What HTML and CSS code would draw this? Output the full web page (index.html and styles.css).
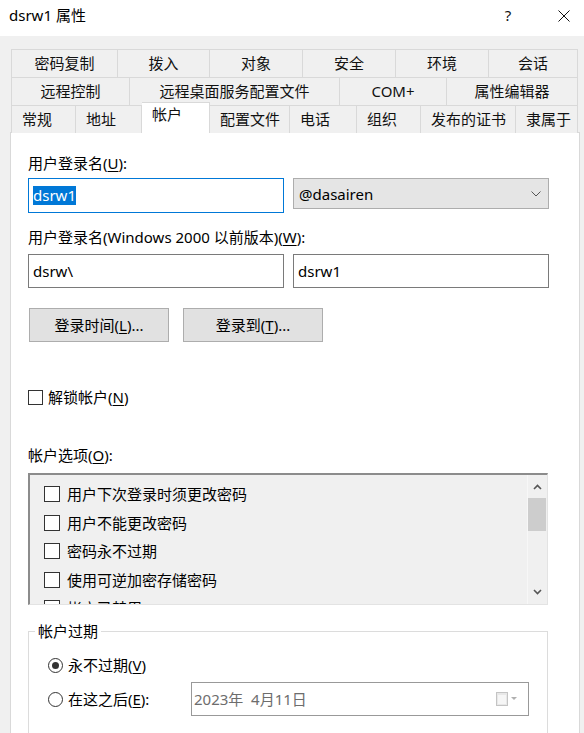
FILE: index.html
```html
<!DOCTYPE html>
<html lang="zh-CN">
<head>
<meta charset="utf-8">
<title>dsrw1 属性</title>
<link rel="stylesheet" href="styles.css">
</head>
<body>
<div class="titlebar">
  <span class="title">dsrw1 属性</span>
  <span class="help">?</span>
  <svg class="close" width="12" height="12" viewBox="0 0 12 12"><path d="M0.5 0.5 L11.5 11.5 M11.5 0.5 L0.5 11.5" stroke="#111" stroke-width="1" fill="none"/></svg>
</div>

<div class="tabs">
  <div class="tabrow r1">
    <div class="tab">密码复制</div>
    <div class="tab">拨入</div>
    <div class="tab">对象</div>
    <div class="tab">安全</div>
    <div class="tab">环境</div>
    <div class="tab">会话</div>
  </div>
  <div class="tabrow r2">
    <div class="tab">远程控制</div>
    <div class="tab">远程桌面服务配置文件</div>
    <div class="tab">COM+</div>
    <div class="tab">属性编辑器</div>
  </div>
  <div class="tabrow r3">
    <div class="tab">常规</div>
    <div class="tab">地址</div>
    <div class="tab active">帐户</div>
    <div class="tab">配置文件</div>
    <div class="tab">电话</div>
    <div class="tab">组织</div>
    <div class="tab">发布的证书</div>
    <div class="tab">隶属于</div>
  </div>
</div>

<div class="page">
  <div class="label">用户登录名(<u>U</u>):</div>
  <div class="pair first">
    <div class="textbox focus"><span class="sel">dsrw1</span></div>
    <div class="combo">
      <span>@dasairen</span>
      <svg width="10" height="6" viewBox="0 0 10 6"><path d="M0.5 0.5 L5 5 L9.5 0.5" stroke="#555" stroke-width="1" fill="none"/></svg>
    </div>
  </div>

  <div class="label gap14">用户登录名(Windows 2000 以前版本)(<u>W</u>):</div>
  <div class="pair second">
    <div class="textbox">dsrw\</div>
    <div class="textbox">dsrw1</div>
  </div>

  <div class="buttons">
    <div class="btn">登录时间(<u>L</u>)...</div>
    <div class="btn">登录到(<u>T</u>)...</div>
  </div>

  <div class="check-row">
    <span class="cb"></span><span>解锁帐户(<u>N</u>)</span>
  </div>

  <div class="label gap38">帐户选项(<u>O</u>):</div>
  <div class="listbox">
    <div class="items">
      <div class="item"><span class="cb16"></span>用户下次登录时须更改密码</div>
      <div class="item"><span class="cb16"></span>用户不能更改密码</div>
      <div class="item"><span class="cb16"></span>密码永不过期</div>
      <div class="item"><span class="cb16"></span>使用可逆加密存储密码</div>
      <div class="item"><span class="cb16"></span>帐户已禁用</div>
    </div>
    <div class="scrollbar">
      <div class="sb-btn up"><svg width="9" height="6" viewBox="0 0 9 6"><path d="M1 5 L4.5 1.5 L8 5" stroke="#555" stroke-width="1.6" fill="none"/></svg></div>
      <div class="thumb"></div>
      <div class="sb-btn down"><svg width="9" height="6" viewBox="0 0 9 6"><path d="M1 1 L4.5 4.5 L8 1" stroke="#555" stroke-width="1.6" fill="none"/></svg></div>
    </div>
  </div>

  <div class="group">
    <div class="legend">帐户过期</div>
    <div class="radio-row one">
      <span class="radio checked"></span><span>永不过期(<u>V</u>)</span>
    </div>
    <div class="radio-row two">
      <span class="radio"></span><span class="radio-label">在这之后(<u>E</u>):</span>
      <div class="datepicker">
        <span class="date">2023年  4月11日</span>
        <span class="dp-icon">
          <svg width="24" height="14" viewBox="0 0 24 14"><rect x="0.5" y="0.5" width="11" height="13" fill="#e8e8e8" stroke="#c4c4c4"/><rect x="2" y="3" width="8" height="9" fill="#f6f6f6"/><path d="M15 5 L21 5 L18 8 Z" fill="#b0b0b0"/></svg>
        </span>
      </div>
    </div>
  </div>
</div>
</body>
</html>
```

FILE: styles.css
```css
* { box-sizing: border-box; }
html, body { margin: 0; height: 100%; overflow: hidden; }
body {
  background: #f0f0f0;
  font-family: "Noto Sans", "Noto Sans CJK SC", sans-serif;
  font-size: 15px;
  line-height: 20px;
  color: #000;
}
u { text-decoration: underline; text-underline-offset: 2px; }

.titlebar {
  height: 36px;
  background: #fff;
  display: flex;
  align-items: flex-start;
  padding: 5px 0 0 9px;
}
.title { flex: 1; }
.help { width: 8px; text-align: center; color: #111; }
.close { margin: 5px 14px 0 46px; }

.tabs { margin: 13px 0 0 11px; width: 567px; }
.tabrow { display: grid; height: 28px; align-items: start; }
.r1 { grid-template-columns: 107px 92px 93px 93px 93px 89px; }
.r2 { grid-template-columns: 119px 210px 107px 131px; }
.r3 { grid-template-columns: 65px 66px 68px 80px 67px 64px 95px 62px; height: 27px; }
.tab {
  height: 100%;
  border-top: 1px solid #d9d9d9;
  border-right: 1px solid #d9d9d9;
  background: #f0f0f0;
  display: flex;
  align-items: center;
  justify-content: center;
  padding-bottom: 2px;
  color: #111;
  white-space: nowrap;
}
.tab:first-child { border-left: 1px solid #d9d9d9; }
.r3 .tab { justify-content: flex-start; padding-left: 10px; }
.r3 .tab.active {
  height: 31px;
  margin-top: -3px;
  background: #fff;
  align-items: flex-start;
  padding-top: 1px;
  padding-bottom: 0;
  position: relative;
  z-index: 1;
}

.page {
  margin-left: 10px;
  width: 570px;
  height: 700px;
  background: #fff;
  border: 1px solid #d9d9d9;
  padding: 20px 0 0 17px;
}
.label { height: 20px; white-space: nowrap; }
.gap14 { margin-top: 14px; }
.gap38 { margin-top: 38px; }

.pair {
  display: grid;
  grid-template-columns: 256px 256px;
  column-gap: 9px;
  align-items: start;
}
.pair.first { margin-top: 5px; }
.pair.second { margin-top: 7px; }
.textbox {
  height: 34px;
  border: 1px solid #7a7a7a;
  background: #fff;
  padding-left: 4px;
  display: flex;
  align-items: center;
}
.textbox.focus { height: 35px; border-color: #0078d7; }
.sel { background: #0078d7; color: #fff; line-height: 19px; }
.combo {
  height: 31px;
  background: #e5e5e5;
  border: 1px solid #adadad;
  padding: 0 7px 0 5px;
  display: flex;
  align-items: center;
  justify-content: space-between;
}

.buttons { margin-top: 20px; padding-left: 1px; display: flex; gap: 14px; }
.btn {
  width: 140px;
  height: 34px;
  background: #e1e1e1;
  border: 1px solid #adadad;
  display: flex;
  align-items: center;
  justify-content: center;
}

.check-row { margin-top: 45px; display: flex; align-items: center; gap: 5px; height: 20px; }
.cb { width: 15px; height: 15px; border: 1px solid #333; background: #fff; }

.listbox {
  margin-top: 8px;
  width: 520px;
  height: 132px;
  background: #f0f0f0;
  border-top: 2px solid #8c8c8c;
  border-left: 2px solid #8c8c8c;
  border-right: 1px solid #e3e3e3;
  border-bottom: 1px solid #e3e3e3;
  display: flex;
  overflow: hidden;
}
.items { flex: 1; padding: 5px 0 0 14px; overflow: hidden; }
.item { height: 28.5px; display: flex; align-items: center; gap: 7px; white-space: nowrap; }
.cb16 { width: 16px; height: 16px; border: 1px solid #333; background: #fff; flex: none; }
.scrollbar {
  width: 20px;
  display: flex;
  flex-direction: column;
  border-left: 1px solid #f7f7f7;
}
.sb-btn { height: 23px; display: flex; align-items: center; justify-content: center; }
.sb-btn.down { margin-top: auto; height: 24px; }
.thumb { height: 33px; background: #cdcdcd; margin-right: 1px; }

.group {
  margin-top: 26px;
  width: 520px;
  height: 200px;
  border: 1px solid #dcdcdc;
  padding-left: 19px;
}
.legend {
  display: table;
  margin: -11px 0 0 -13px;
  padding: 0 3px;
  background: #fff;
}
.radio-row { display: flex; align-items: center; gap: 5px; }
.radio-row.one { margin-top: 14px; height: 20px; }
.radio-row.two { margin-top: 7px; height: 34px; }
.radio {
  width: 15px;
  height: 15px;
  border: 1px solid #333;
  border-radius: 50%;
  background: #fff;
  display: flex;
  align-items: center;
  justify-content: center;
  flex: none;
}
.radio.checked::after {
  content: "";
  width: 7px;
  height: 7px;
  border-radius: 50%;
  background: #333;
}
.radio-label { width: 118px; }
.datepicker {
  width: 338px;
  height: 34px;
  border: 1px solid #999;
  background: #fff;
  padding: 0 8px 0 2px;
  display: flex;
  align-items: center;
  justify-content: space-between;
  color: #6d6d6d;
}
.date { white-space: pre; }
.dp-icon { display: flex; }
```
